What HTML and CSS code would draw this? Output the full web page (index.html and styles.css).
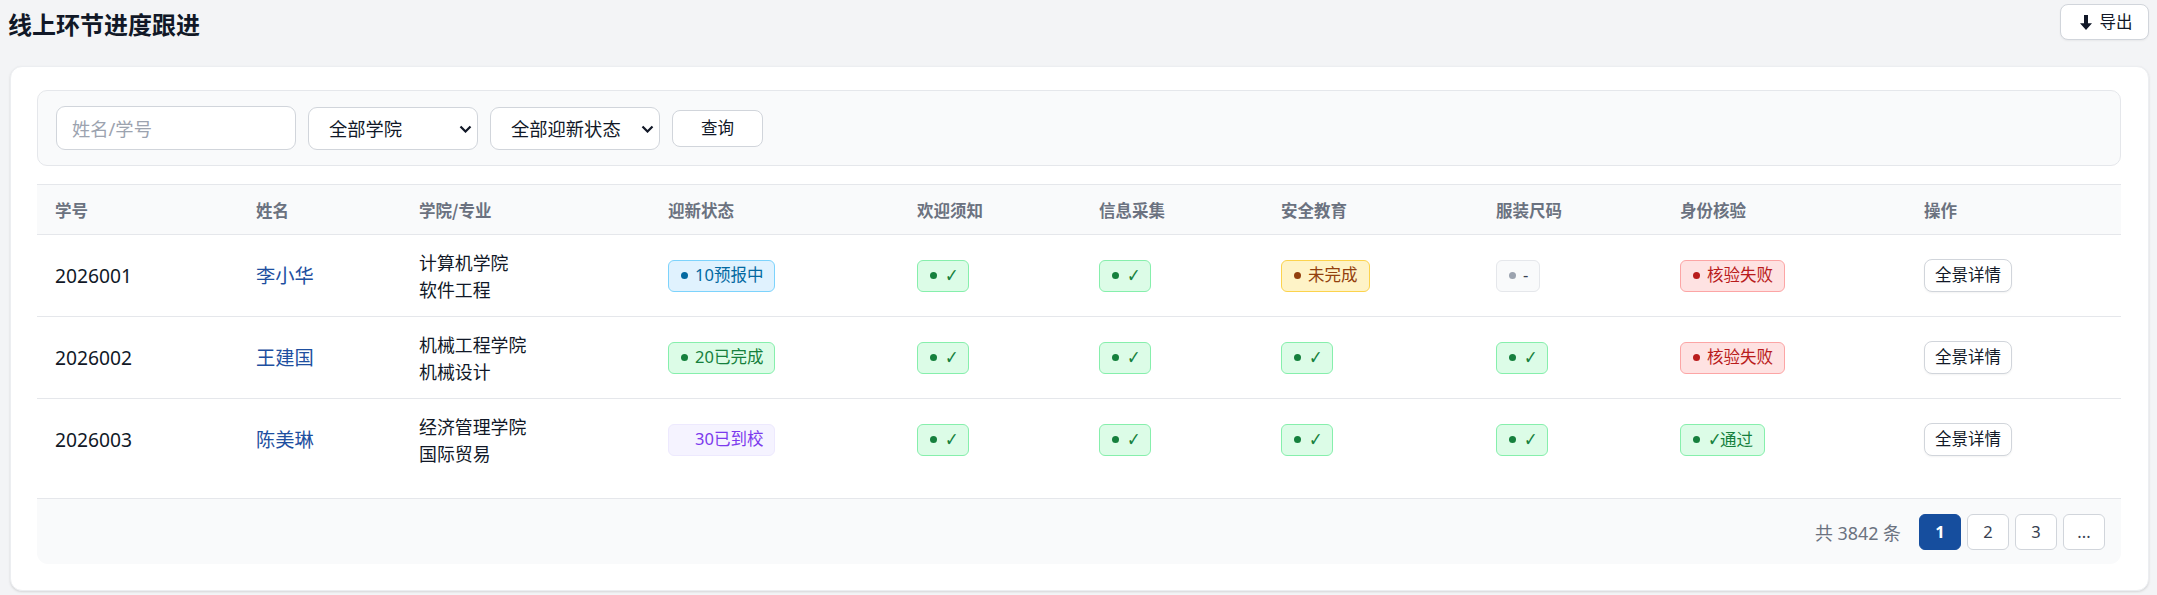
FILE: index.html
```html
<!DOCTYPE html>
<html lang="zh-CN">
<head>
<meta charset="utf-8">
<title>线上环节进度跟进</title>
<link rel="stylesheet" href="styles.css">
</head>
<body>
<div class="page">
  <header class="topbar">
    <h1 class="title">线上环节进度跟进</h1>
    <button class="btn export-btn" type="button">
      <svg class="export-icon" width="12" height="15" viewBox="0 0 12 15"><path d="M4 0h4v8.2h4L6 15 0 8.2h4z" fill="#111827"/></svg>
      <span>导出</span>
    </button>
  </header>

  <section class="card">
    <div class="filters">
      <input class="field input" type="text" placeholder="姓名/学号">
      <div class="select-wrap">
        <select class="field select"><option>全部学院</option></select>
        <svg class="chev" width="13" height="8" viewBox="0 0 13 8"><path d="M1.5 1.5l5 5 5-5" fill="none" stroke="#111827" stroke-width="2.2"/></svg>
      </div>
      <div class="select-wrap">
        <select class="field select"><option>全部迎新状态</option></select>
        <svg class="chev" width="13" height="8" viewBox="0 0 13 8"><path d="M1.5 1.5l5 5 5-5" fill="none" stroke="#111827" stroke-width="2.2"/></svg>
      </div>
      <button class="btn query-btn" type="button">查询</button>
    </div>

    <table class="grid">
      <colgroup>
        <col class="c1"><col class="c2"><col class="c3"><col class="c4"><col class="c5">
        <col class="c6"><col class="c7"><col class="c8"><col class="c9"><col class="c10">
      </colgroup>
      <thead>
        <tr>
          <th>学号</th><th>姓名</th><th>学院/专业</th><th>迎新状态</th><th>欢迎须知</th>
          <th>信息采集</th><th>安全教育</th><th>服装尺码</th><th>身份核验</th><th>操作</th>
        </tr>
      </thead>
      <tbody>
        <tr>
          <td class="sid">2026001</td>
          <td><a class="name">李小华</a></td>
          <td class="major"><div>计算机学院</div><div>软件工程</div></td>
          <td><span class="badge blue"><i class="dot"></i><span>10预报中</span></span></td>
          <td><span class="badge green"><i class="dot"></i><span class="ck">✓</span></span></td>
          <td><span class="badge green"><i class="dot"></i><span class="ck">✓</span></span></td>
          <td><span class="badge yellow"><i class="dot"></i><span>未完成</span></span></td>
          <td><span class="badge gray"><i class="dot"></i><span>-</span></span></td>
          <td><span class="badge red"><i class="dot"></i><span>核验失败</span></span></td>
          <td><button class="btn detail-btn" type="button">全景详情</button></td>
        </tr>
        <tr>
          <td class="sid">2026002</td>
          <td><a class="name">王建国</a></td>
          <td class="major"><div>机械工程学院</div><div>机械设计</div></td>
          <td><span class="badge green"><i class="dot"></i><span>20已完成</span></span></td>
          <td><span class="badge green"><i class="dot"></i><span class="ck">✓</span></span></td>
          <td><span class="badge green"><i class="dot"></i><span class="ck">✓</span></span></td>
          <td><span class="badge green"><i class="dot"></i><span class="ck">✓</span></span></td>
          <td><span class="badge green"><i class="dot"></i><span class="ck">✓</span></span></td>
          <td><span class="badge red"><i class="dot"></i><span>核验失败</span></span></td>
          <td><button class="btn detail-btn" type="button">全景详情</button></td>
        </tr>
        <tr>
          <td class="sid">2026003</td>
          <td><a class="name">陈美琳</a></td>
          <td class="major"><div>经济管理学院</div><div>国际贸易</div></td>
          <td><span class="badge purple"><i class="dot"></i><span>30已到校</span></span></td>
          <td><span class="badge green"><i class="dot"></i><span class="ck">✓</span></span></td>
          <td><span class="badge green"><i class="dot"></i><span class="ck">✓</span></span></td>
          <td><span class="badge green"><i class="dot"></i><span class="ck">✓</span></span></td>
          <td><span class="badge green"><i class="dot"></i><span class="ck">✓</span></span></td>
          <td><span class="badge green"><i class="dot"></i><span><span class="ck">✓</span>通过</span></span></td>
          <td><button class="btn detail-btn" type="button">全景详情</button></td>
        </tr>
      </tbody>
    </table>

    <div class="footer">
      <span class="total">共 3842 条</span>
      <div class="pager">
        <span class="pg active">1</span>
        <span class="pg">2</span>
        <span class="pg">3</span>
        <span class="pg">...</span>
      </div>
    </div>
  </section>
</div>
</body>
</html>
```

FILE: styles.css
```css
* { box-sizing: border-box; }

html, body {
  margin: 0;
  padding: 0;
  background: #f3f4f6;
}

body {
  font-family: "Noto Sans", "Noto Sans CJK SC", "DejaVu Sans", sans-serif;
  color: #111827;
  font-size: 19.25px;
}

.page {
  padding: 4px 8px 6px 10px;
}

.topbar {
  display: flex;
  justify-content: space-between;
  align-items: center;
  height: 36px;
  margin-bottom: 26px;
}

.title {
  margin: 0 0 0 -2px;
  font-size: 24px;
  font-weight: 700;
  line-height: 1;
  color: #111827;
  font-family: "Noto Sans CJK SC", sans-serif;
  position: relative;
  top: 2px;
}

.btn {
  font-family: "Noto Sans", "Noto Sans CJK SC", sans-serif;
  background: #fff;
  border: 1px solid #d1d5db;
  color: #111827;
  cursor: pointer;
  display: inline-flex;
  align-items: center;
  justify-content: center;
  padding: 0;
  line-height: 1;
}

.export-btn {
  height: 36px;
  width: 89px;
  border-radius: 8px;
  font-size: 16.5px;
  gap: 8px;
  padding: 0 0 0 3px;
  box-shadow: 0 1px 2px rgba(0, 0, 0, 0.05);
}

.export-icon { display: block; }

.card {
  background: #fff;
  border-radius: 12px;
  border: 1px solid #eceef1;
  box-shadow: 0 1px 3px rgba(0, 0, 0, 0.08), 0 1px 2px rgba(0, 0, 0, 0.05);
  padding: 23px 27px 26px 26px;
}

.filters {
  display: flex;
  align-items: center;
  gap: 12px;
  height: 76px;
  padding: 0 18px;
  background: #f9fafb;
  border: 1px solid #e5e7eb;
  border-radius: 10px;
  margin-bottom: 18px;
}

.field {
  font-family: "Noto Sans", "Noto Sans CJK SC", sans-serif;
  font-size: 18.3px;
  color: #111827;
  background: #fff;
  border: 1px solid #d1d5db;
  border-radius: 9px;
  outline: none;
}

.input {
  width: 240px;
  height: 44px;
  padding: 0 15px;
}

.input::placeholder { color: #9ca3af; }

.select-wrap {
  position: relative;
  width: 170px;
  height: 43px;
}

.select {
  -webkit-appearance: none;
  appearance: none;
  width: 100%;
  height: 100%;
  padding: 0 0 0 20px;
}

.chev {
  position: absolute;
  right: 6px;
  top: 18px;
  pointer-events: none;
}

.query-btn {
  width: 91px;
  height: 37px;
  border-radius: 8px;
  font-size: 16.5px;
}

.grid {
  width: 100%;
  border-collapse: collapse;
  table-layout: fixed;
}

.c1 { width: 201px; }
.c2 { width: 163px; }
.c3 { width: 249px; }
.c4 { width: 249px; }
.c5 { width: 182px; }
.c6 { width: 182px; }
.c7 { width: 215px; }
.c8 { width: 184px; }
.c9 { width: 244px; }
.c10 { width: 215px; }

.grid th {
  height: 50px;
  padding: 0 18px;
  text-align: left;
  font-size: 16.5px;
  font-weight: 700;
  color: #6b7280;
  background: #f9fafb;
  border-top: 1px solid #e5e7eb;
  border-bottom: 1px solid #e5e7eb;
  font-family: "Noto Sans CJK SC", sans-serif;
}

.grid td {
  padding: 13.75px 18px;
  vertical-align: middle;
  border-bottom: 1px solid #e5e7eb;
  font-size: 19.25px;
  line-height: 27px;
}

.grid tbody tr:last-child td { border-bottom: none; }

.sid { color: #111827; }

.name {
  color: #1e4fa0;
  text-decoration: none;
  font-family: "Noto Sans CJK SC", sans-serif;
}

.grid td.major {
  font-size: 17.9px;
  line-height: 26.8px;
  color: #111827;
  font-family: "Noto Sans CJK SC", sans-serif;
}

.badge {
  display: inline-flex;
  align-items: center;
  height: 32px;
  padding: 0 11px 0 12px;
  border: 1px solid;
  border-radius: 6px;
  font-size: 16.5px;
  line-height: 1;
  gap: 7px;
  white-space: nowrap;
  vertical-align: middle;
}

.dot {
  display: inline-block;
  width: 7px;
  height: 7px;
  border-radius: 50%;
  background: currentColor;
  flex: none;
}

.ck {
  font-family: "DejaVu Sans", sans-serif;
  font-size: 19px;
  display: inline-block;
  width: 13px;
  transform: scaleX(0.85);
}

.blue { background: #e0f2fe; border-color: #7dd3fc; color: #0369a1; }
.green { background: #dcfce7; border-color: #86efac; color: #15803d; }
.yellow { background: #fef3c7; border-color: #fcd34d; color: #92400e; }
.gray { background: #f9fafb; border-color: #e5e7eb; color: #374151; }
.gray .dot { background: #9ca3af; }
.red { background: #fee2e2; border-color: #fca5a5; color: #b91c1c; }
.purple { background: #f5f3ff; border-color: #ede9fe; color: #7c3aed; }
.purple .dot { background: transparent; }

.detail-btn {
  height: 33px;
  padding: 0 10px;
  border-radius: 8px;
  font-size: 16.5px;
  box-shadow: 0 1px 2px rgba(0, 0, 0, 0.05);
}

.footer {
  margin-top: 18px;
  height: 66px;
  display: flex;
  justify-content: flex-end;
  align-items: center;
  gap: 18px;
  padding: 0 16px;
  background: #f9fafb;
  border-top: 1px solid #e5e7eb;
  border-radius: 0 0 11px 11px;
}

.total {
  font-size: 17.9px;
  color: #6b7280;
}

.pager {
  display: flex;
  gap: 6px;
}

.pg {
  width: 42px;
  height: 36px;
  display: flex;
  align-items: center;
  justify-content: center;
  border: 1px solid #d1d5db;
  border-radius: 6px;
  background: #fff;
  font-size: 16.5px;
  color: #374151;
}

.pg.active {
  background: #164e9e;
  border-color: #164e9e;
  color: #fff;
  font-weight: 700;
}
```
